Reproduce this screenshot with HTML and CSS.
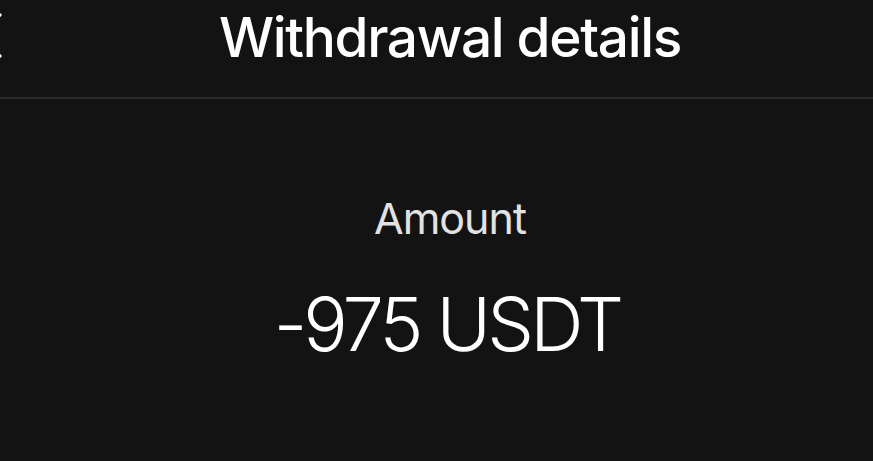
FILE: index.html
```html
<!DOCTYPE html>
<html lang="en">
<head>
<meta charset="utf-8">
<title>Withdrawal details</title>
<link rel="stylesheet" href="styles.css">
</head>
<body>
<div class="screen">
  <header class="topbar">
    <button class="back" aria-label="Back">
      <svg width="40" height="50" viewBox="0 0 40 50" fill="none">
        <path d="M38 4 L18 24.5 L38 45" stroke="#ffffff" stroke-width="3.2" stroke-linecap="round" stroke-linejoin="round"/>
      </svg>
    </button>
    <h1 class="title">Withdrawal details</h1>
    <span class="spacer"></span>
  </header>
  <main class="summary">
    <div class="label">Amount</div>
    <div class="value">-975 USDT</div>
  </main>
</div>
</body>
</html>
```
FILE: styles.css
```css
html, body {
  margin: 0;
  padding: 0;
  background: #131313;
  overflow: hidden;
}
body {
  font-family: Inter, "Noto Sans", sans-serif;
  color: #ffffff;
}
.screen {
  width: 900px;
  height: 461px;
  background: #131313;
}
.topbar {
  display: flex;
  align-items: flex-start;
  height: 97px;
  border-bottom: 2px solid #2a2a2a;
}
.back {
  flex: 0 0 auto;
  width: 60px;
  margin-left: -38px;
  margin-top: 11px;
  padding: 0;
  border: 0;
  background: none;
  display: flex;
}
.title {
  flex: 1 1 auto;
  margin: 0;
  text-align: center;
  font-size: 55px;
  line-height: 74px;
  font-weight: 500;
  letter-spacing: -1.35px;
}
.spacer {
  flex: 0 0 auto;
  width: 22px;
}
.summary {
  display: flex;
  flex-direction: column;
  align-items: center;
  padding-top: 93px;
}
.label {
  font-size: 43px;
  line-height: 52px;
  color: #e2e2e2;
  font-weight: 400;
  letter-spacing: -1px;
}
.value {
  margin-top: 36px;
  padding-right: 6px;
  font-size: 74px;
  line-height: 89px;
  font-weight: 300;
  letter-spacing: -3.8px;
}
```
